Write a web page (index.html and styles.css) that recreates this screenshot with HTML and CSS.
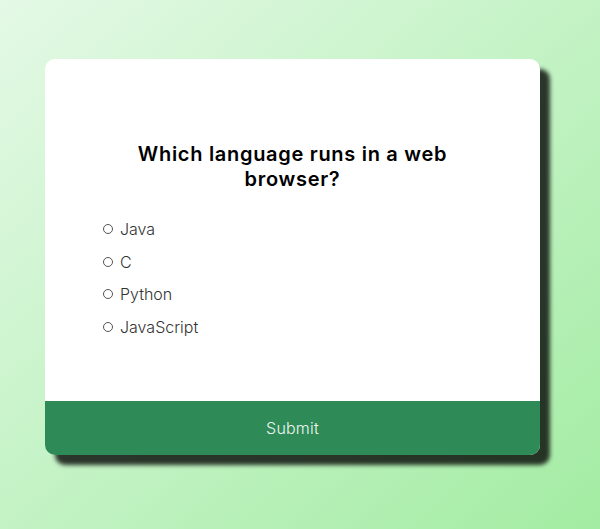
FILE: index.html
```html
<!DOCTYPE html>
<html lang="en">
<head>
<meta charset="UTF-8">
<title>Quiz</title>
<link rel="stylesheet" href="styles.css">
</head>
<body>
  <div class="quiz">
    <div class="quiz-header">
      <h2 class="question">Which language runs in a web browser?</h2>
      <ul class="answers">
        <li class="answer"><input type="radio" name="answer" id="a" class="radio"><label for="a">Java</label></li>
        <li class="answer"><input type="radio" name="answer" id="b" class="radio"><label for="b">C</label></li>
        <li class="answer"><input type="radio" name="answer" id="c" class="radio"><label for="c">Python</label></li>
        <li class="answer"><input type="radio" name="answer" id="d" class="radio"><label for="d">JavaScript</label></li>
      </ul>
    </div>
    <button class="submit">Submit</button>
  </div>
</body>
</html>
```
FILE: styles.css
```css
* { box-sizing: border-box; }
html, body { margin: 0; height: 100%; }
body {
  font-family: Inter, "Open Sans", sans-serif;
  background: linear-gradient(to bottom right, #e4f9e6, #a3eca3);
  padding: 59px 0 0 45px;
  overflow: hidden;
}
.quiz {
  width: 495px;
  background: #fff;
  border-radius: 10px;
  overflow: hidden;
  box-shadow: 10px 10px 4px rgba(0, 0, 0, 0.78);
}
.quiz-header {
  padding: 83px 58px 0;
}
.question {
  margin: 0 auto;
  width: 350px;
  text-align: center;
  font-size: 20px;
  line-height: 25px;
  font-weight: 600;
  letter-spacing: 0.7px;
  color: #000;
}
.answers {
  list-style: none;
  margin: 21px 0 0;
  padding: 0 0 58px;
}
.answer {
  display: flex;
  align-items: center;
  height: 32.5px;
  font-size: 16px;
  font-weight: 300;
  color: #333;
}
.radio {
  appearance: none;
  -webkit-appearance: none;
  width: 10px;
  height: 10px;
  margin: 0 7px 0 0;
  border: 1px solid #555;
  border-radius: 50%;
  background: #fff;
}
.submit {
  display: block;
  width: 100%;
  height: 54px;
  border: none;
  background: #2e8a57;
  color: #eef7f1;
  font-family: inherit;
  font-size: 16px;
  font-weight: 300;
  letter-spacing: 0.2px;
}
```
